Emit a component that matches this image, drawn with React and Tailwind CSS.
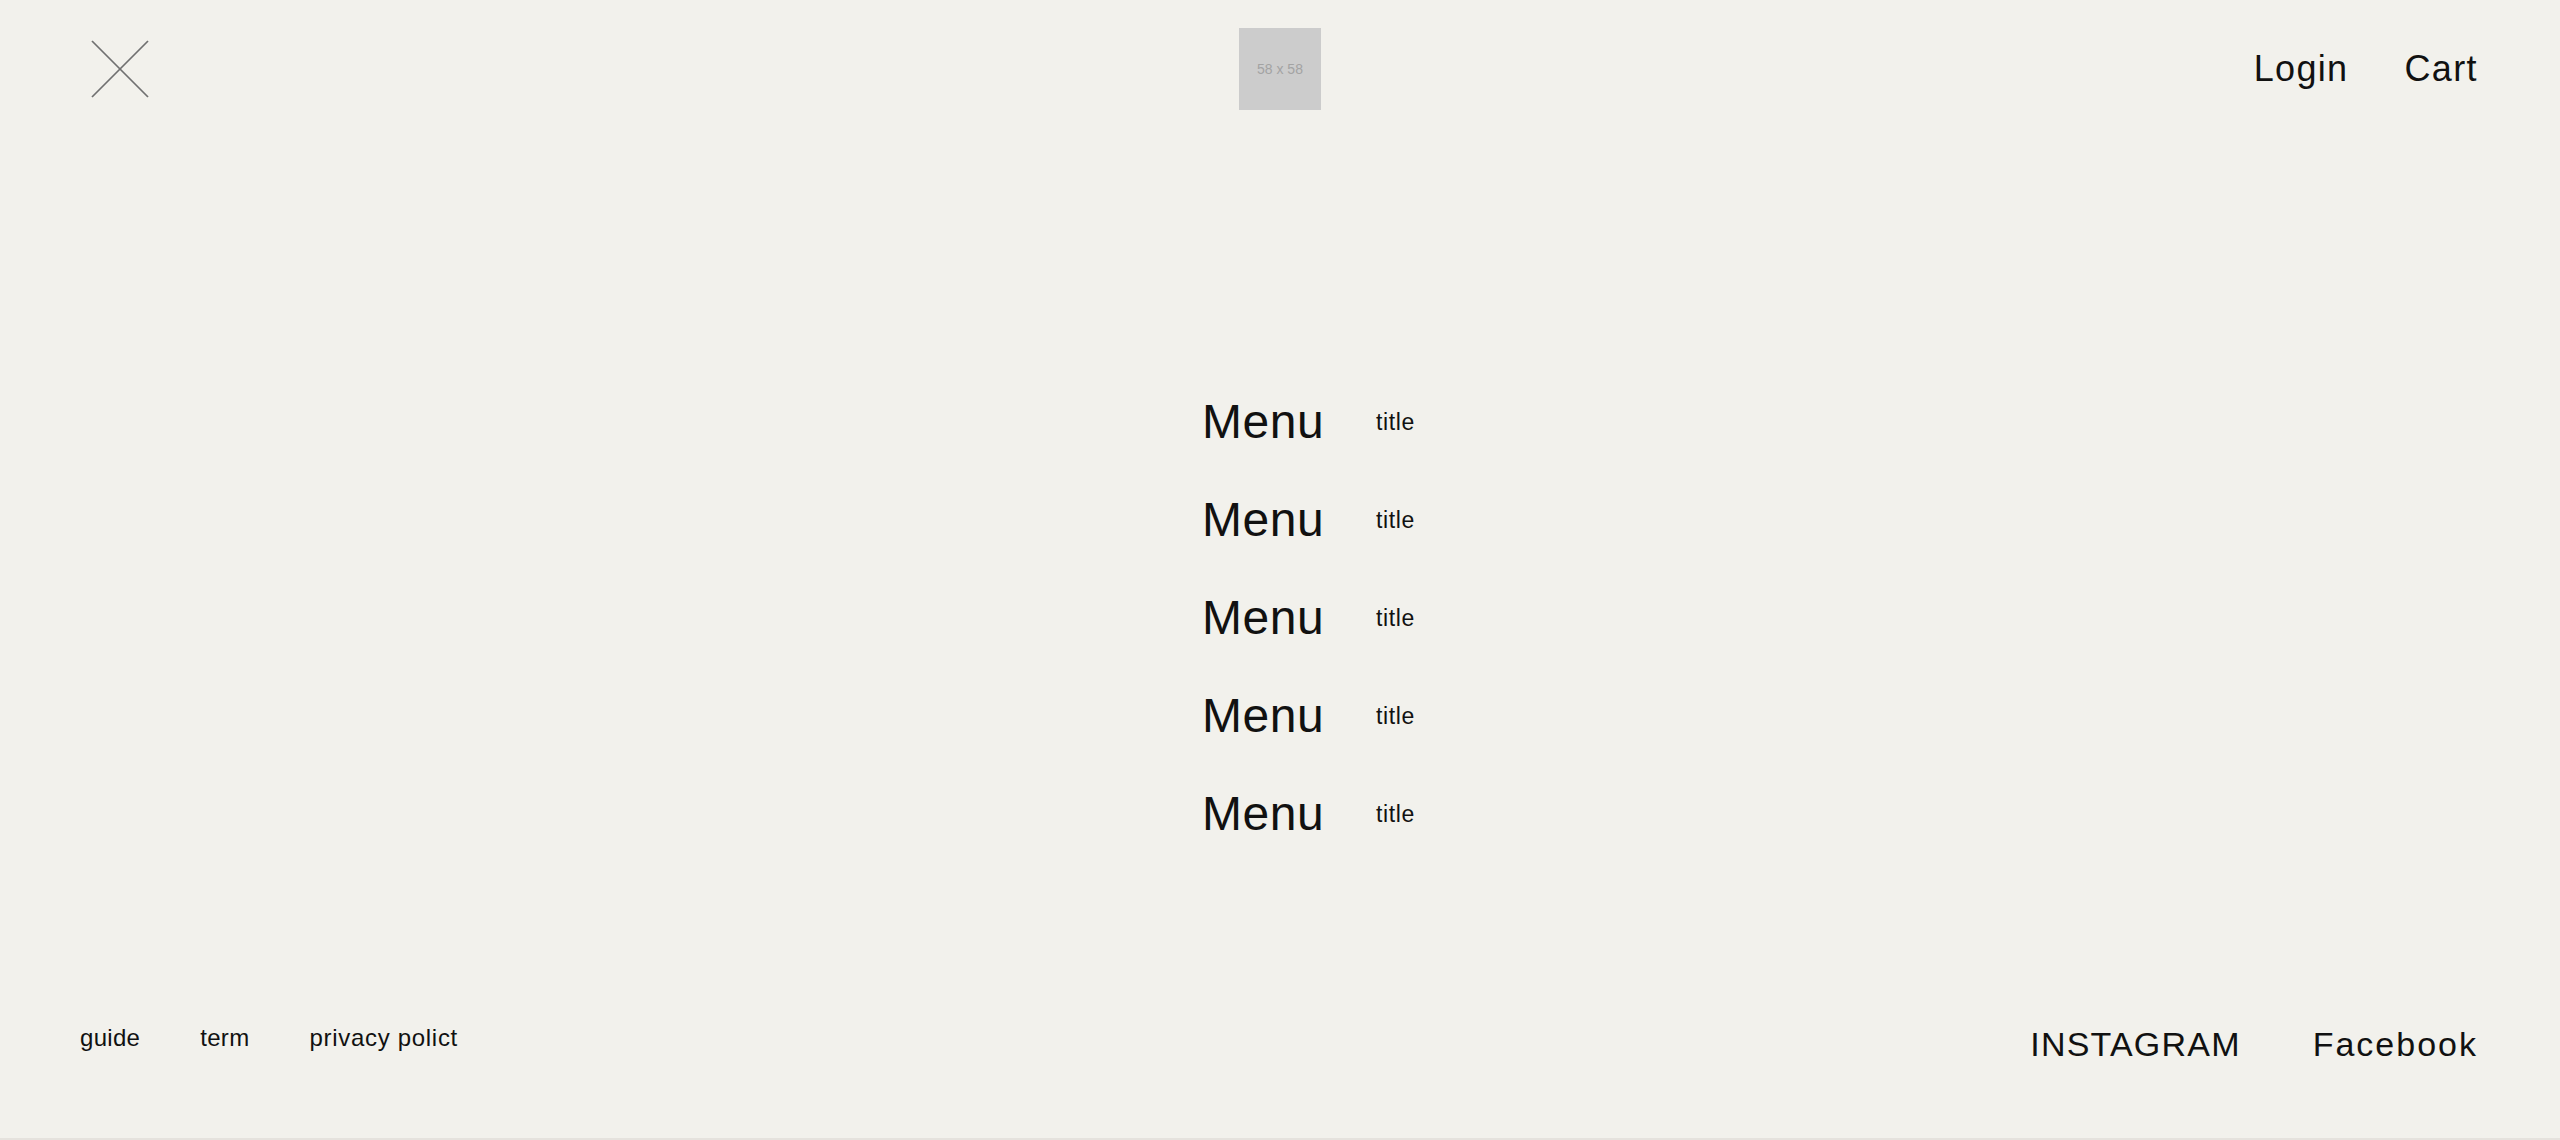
import React from "react"

const font = { fontFamily: '"Liberation Sans", Arial, "Noto Sans CJK JP", sans-serif' }

function CloseIcon() {
  return (
    <svg width="58" height="58" viewBox="0 0 58 58" fill="none">
      <line x1="1" y1="1" x2="57" y2="57" stroke="#707070" strokeWidth="1.7" />
      <line x1="57" y1="1" x2="1" y2="57" stroke="#707070" strokeWidth="1.7" />
    </svg>
  )
}

const menus = ["Menu", "Menu", "Menu", "Menu", "Menu"]

export default function App() {
  return (
    <div
      className="h-[1140px] flex flex-col bg-[#f2f1ec] text-[#111] border-b-2 border-[#e5e2dd]"
      style={font}
    >
      {/* header */}
      <header className="h-[138px] grid grid-cols-3 items-center px-[82px]">
        <button className="justify-self-start ml-[9px]">
          <CloseIcon />
        </button>
        <div className="justify-self-center w-[82px] h-[82px] bg-[#cccccc] flex items-center justify-center text-[14px] text-[#a3a3a3]">
          58 x 58
        </div>
        <nav className="justify-self-end flex items-center gap-[56px] text-[36px]">
          <a className="tracking-[1.3px]">Login</a>
          <a className="tracking-[1.4px]">Cart</a>
        </nav>
      </header>

      {/* menu list */}
      <main className="pt-[235px]">
        <ul className="mx-auto w-[400px] pl-[122px]">
          {menus.map((m, i) => (
            <li key={i} className="h-[98px] flex items-center">
              <span className="w-[120px] text-[48px] tracking-[0.5px]">{m}</span>
              <span className="ml-[54px] text-[23px] tracking-[0.6px]">title</span>
            </li>
          ))}
        </ul>
      </main>

      {/* footer */}
      <footer className="mt-auto pb-[68px] flex items-start justify-between pl-[80px] pr-[82px]">
        <div className="flex gap-[60px] pt-[1px] text-[24px] tracking-[0.3px]">
          <a>guide</a>
          <a>term</a>
          <a className="tracking-[0.7px]">privacy polict</a>
        </div>
        <div className="flex gap-[72px] text-[34px] tracking-[1.2px]">
          <a>INSTAGRAM</a>
          <a className="tracking-[2px]">Facebook</a>
        </div>
      </footer>
    </div>
  )
}
